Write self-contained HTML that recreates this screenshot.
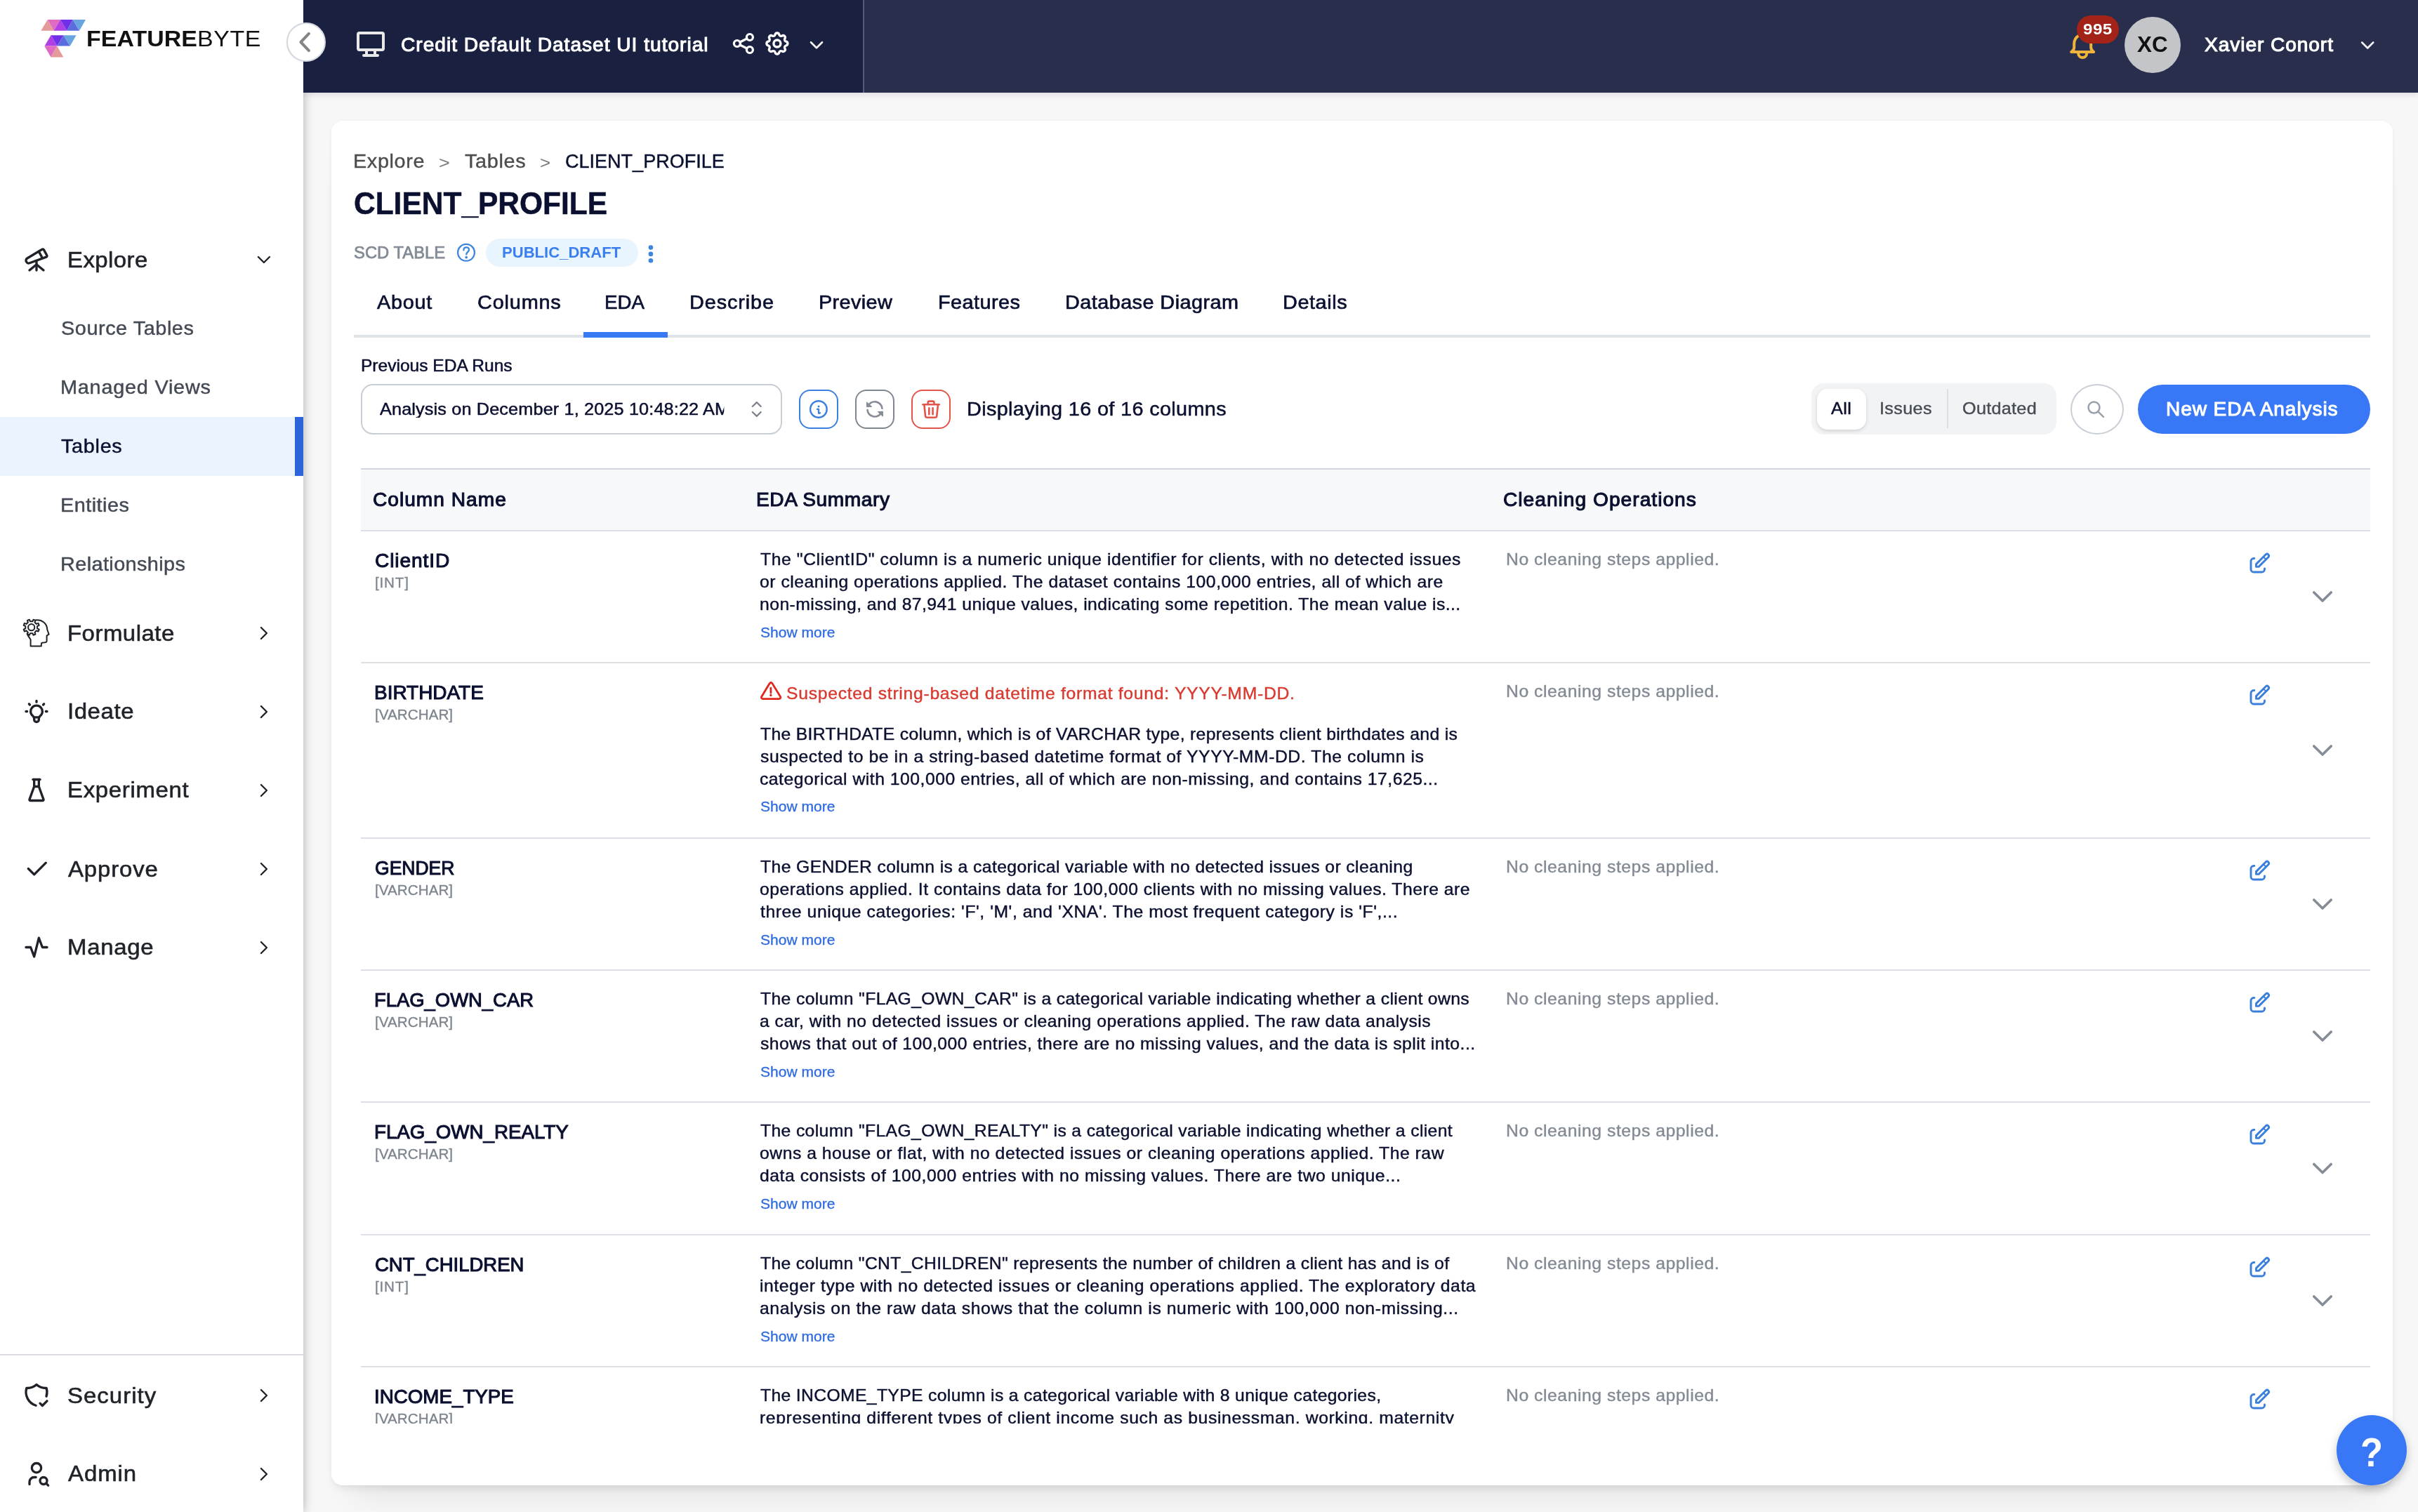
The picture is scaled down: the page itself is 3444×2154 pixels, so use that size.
<!DOCTYPE html>
<html lang="en"><head><meta charset="utf-8"><title>CLIENT_PROFILE - EDA</title>
<style>
html,body{margin:0;padding:0;background:#f7f7f8;}
body{width:3444px;height:2154px;overflow:hidden;position:relative;background:#f7f7f8;font-family:"Liberation Sans",sans-serif;}
.abs{position:absolute;}
.t{position:absolute;white-space:pre;line-height:1;transform-origin:0 50%;}
#sidebar{left:0;top:0;width:432px;height:2154px;background:#fff;box-shadow:0 0 14px rgba(0,0,0,.30);}
#hdrshadow{left:432px;top:0;width:3012px;height:132px;box-shadow:0 2px 9px rgba(20,25,60,.13);}
#hdrL{left:432px;top:0;width:798px;height:132px;background:#1a203f;}
#hdrR{left:1229px;top:0;width:2215px;height:132px;background:#282e4b;border-left:2px solid #565c76;box-sizing:border-box;}
#collapse{left:408px;top:32px;width:56px;height:56px;border-radius:50%;background:#fff;border:2px solid #d3d7df;box-sizing:border-box;box-shadow:0 1px 3px rgba(0,0,0,.08);}
#card{left:472px;top:172px;width:2936px;height:1944px;border-radius:16px;background:#fff;box-shadow:0 8px 12px -4px rgba(0,0,0,.08),0 38px 48px -30px rgba(0,0,0,.10),0 0 5px rgba(0,0,0,.03);}
#active{left:0;top:594px;width:432px;height:84px;background:#eaf4fe;}
#activebar{left:420px;top:594px;width:12px;height:84px;background:#2c65da;}
#badge995{left:2958px;top:22px;width:60px;height:40px;border-radius:20px;background:#a32318;}
#avatar{left:3026px;top:24px;width:80px;height:80px;border-radius:50%;background:#c4c5c9;}
#pubdraft{left:692px;top:340px;width:217px;height:40px;border-radius:20px;background:#e8f4fe;}
#tabline{left:504px;top:477px;width:2872px;height:4px;background:#dfe2e7;}
#tabactive{left:831px;top:473px;width:120px;height:8px;background:#3878f5;}
#select{left:514px;top:547px;width:600px;height:72px;border:2px solid #c9ced6;border-radius:17px;box-sizing:border-box;background:#fff;}
.ib{top:555px;width:56px;height:56px;border-radius:16px;box-sizing:border-box;border:2px solid;background:#fff;}
#seg{left:2580px;top:546px;width:349px;height:73px;border-radius:18px;background:#f2f3f5;}
#segall{left:2588px;top:554px;width:70px;height:58px;border-radius:15px;background:#fff;box-shadow:0 2px 5px rgba(0,0,0,.14);}
#segdiv{left:2773px;top:554px;width:2px;height:56px;background:#dcdfe4;}
#search{left:2949px;top:547px;width:76px;height:72px;border-radius:50%;border:2px solid #c9ced6;box-sizing:border-box;background:#fff;}
#newbtn{left:3045px;top:548px;width:331px;height:70px;border-radius:35px;background:#3877f5;}
#thead{left:514px;top:667px;width:2862px;height:90px;background:#f7f8fa;border-top:2px solid #d2d6de;border-bottom:2px solid #dde0e6;box-sizing:border-box;}
#cover{left:480px;top:2028px;width:2920px;height:80px;background:#fff;}
#help{left:3328px;top:2016px;width:100px;height:100px;border-radius:50%;background:#3877f5;box-shadow:0 6px 14px rgba(0,0,0,.22);}
</style></head><body>
<div class="abs" id="hdrshadow"></div>
<div class="abs" id="card"></div>
<div class="abs" id="sidebar"></div>
<div class="abs" id="hdrL"></div><div class="abs" id="hdrR"></div>
<div class="abs" id="active"></div><div class="abs" id="activebar"></div>

<svg class="abs" style="left:0;top:0" width="432" height="2154" viewBox="0 0 432 2154" fill="none" stroke="#1f2329" stroke-linecap="round" stroke-linejoin="round">
<!-- logo -->
<g stroke="none">
<polygon points="58.3,43.8 67.8,28 76.6,43.8" fill="#e59a9a"/>
<polygon points="67.8,28 86,28 76.6,43.8" fill="#df6cc0"/>
<polygon points="76.6,43.8 86,28 95.1,43.8" fill="#b040e4"/>
<polygon points="86,28 103.8,28 95.1,43.8" fill="#7030e8"/>
<polygon points="95.1,43.8 103.8,28 113,43.8" fill="#5b6cdf"/>
<polygon points="103.8,28 122,28 113,43.8" fill="#68a4e0"/>
<polygon points="63.6,65.6 72.5,50.2 81.4,65.6" fill="#b040e4"/>
<polygon points="72.5,50.2 90.5,50.2 81.4,65.6" fill="#7030e8"/>
<polygon points="81.4,65.6 90.5,50.2 99.8,65.6" fill="#5b6cdf"/>
<polygon points="90.5,50.2 108.6,50.2 99.8,65.6" fill="#68a4e0"/>
<polygon points="63.2,65.6 81.2,65.6 72.5,81.6" fill="#df6cc0"/>
<polygon points="72.5,81.6 81.2,65.6 90.4,81.6" fill="#e59a9a"/>
</g>
<g transform="translate(32 350) scale(1.6667)" stroke-width="2.0"><path d="M6 21l6 -5l6 5"/><path d="M12 13v8"/><path d="M3.294 13.678l.166 .281c.52 .88 1.624 1.265 2.605 .91l14.242 -5.165a1.023 1.023 0 0 0 .565 -1.456l-2.62 -4.705a1.087 1.087 0 0 0 -1.447 -.42l-.056 .032l-12.694 7.618c-1.02 .613 -1.357 1.897 -.76 2.905z"/><path d="M14 5l3 5.5"/></g>
<path d="M367.9 366 L375.9 374 L383.9 366" stroke-width="2.4"/>
<!-- formulate: head with gear -->
<g stroke-width="2">
<path d="M53.13 895.38 L55.74 896.54 L54.51 899.50 L51.85 898.48 L49.48 900.85 L50.50 903.51 L47.54 904.74 L46.38 902.13 L43.02 902.13 L41.86 904.74 L38.90 903.51 L39.92 900.85 L37.55 898.48 L34.89 899.50 L33.66 896.54 L36.27 895.38 L36.27 892.02 L33.66 890.86 L34.89 887.90 L37.55 888.92 L39.92 886.55 L38.90 883.89 L41.86 882.66 L43.02 885.27 L46.38 885.27 L47.54 882.66 L50.50 883.89 L49.48 886.55 L51.85 888.92 L54.51 887.90 L55.74 890.86 L53.13 892.02 Z"/>
<circle cx="44.7" cy="893.7" r="4.6"/>
<path d="M50.5 883.5 C60 882.5 67 888 67.3 897 L69.6 903.6 L66.6 905.6 L66.6 913.5 C66.6 915.2 65 915.4 60 915.8 C58.8 916 58.8 917 58.8 920.6 H43.6 V911 C41.5 908 39.5 905.5 38.6 902.6"/>
</g>
<path d="M371.9 894 L379.9 902 L371.9 910" fill="none" stroke="#1f2329" stroke-width="2.4" stroke-linecap="round" stroke-linejoin="round"/>
<g transform="translate(32 993.5) scale(1.6667)" stroke-width="2.0"><path d="M3 12h1m8 -9v1m8 8h1m-15.4 -6.4l.7 .7m12.1 -.7l-.7 .7"/><path d="M9 16a5 5 0 1 1 6 0a3.5 3.5 0 0 0 -1 3a2 2 0 0 1 -4 0a3.5 3.5 0 0 0 -1 -3"/><path d="M9.7 17l4.6 0"/></g>
<path d="M371.9 1006 L379.9 1014 L371.9 1022" fill="none" stroke="#1f2329" stroke-width="2.4" stroke-linecap="round" stroke-linejoin="round"/>
<g transform="translate(32 1105.5) scale(1.6667)" stroke-width="2.0"><path d="M9 3l6 0"/><path d="M10 9l4 0"/><path d="M10 3v6l-4 11a.7 .7 0 0 0 .5 1h11a.7 .7 0 0 0 .5 -1l-4 -11v-6"/></g>
<path d="M371.9 1118 L379.9 1126 L371.9 1134" fill="none" stroke="#1f2329" stroke-width="2.4" stroke-linecap="round" stroke-linejoin="round"/>
<g transform="translate(32 1217.5) scale(1.6667)" stroke-width="2.0"><path d="M5 12l5 5l10 -10"/></g>
<path d="M371.9 1230 L379.9 1238 L371.9 1246" fill="none" stroke="#1f2329" stroke-width="2.4" stroke-linecap="round" stroke-linejoin="round"/>
<g transform="translate(32 1329.5) scale(1.6667)" stroke-width="2.0"><path d="M3 12h4l3 8l4 -16l3 8h4"/></g>
<path d="M371.9 1342 L379.9 1350 L371.9 1358" fill="none" stroke="#1f2329" stroke-width="2.4" stroke-linecap="round" stroke-linejoin="round"/>
<path d="M0 1930 H432" stroke="#d9dde3" stroke-width="2" stroke-linecap="butt"/>
<g transform="translate(32 1967.5) scale(1.6667)" stroke-width="2.0"><path d="M11.46 20.846a12 12 0 0 1 -7.96 -14.846a12 12 0 0 0 8.5 -3a12 12 0 0 0 8.5 3a12 12 0 0 1 -.09 7.06"/><path d="M15 19l2 2l4 -4"/></g>
<path d="M371.9 1980 L379.9 1988 L371.9 1996" fill="none" stroke="#1f2329" stroke-width="2.4" stroke-linecap="round" stroke-linejoin="round"/>
<g transform="translate(32 2079.5) scale(1.6667)" stroke-width="2.0"><path d="M8 7a4 4 0 1 0 8 0a4 4 0 0 0 -8 0"/><path d="M6 21v-2a4 4 0 0 1 4 -4h1.5"/><path d="M18 18m-3 0a3 3 0 1 0 6 0a3 3 0 1 0 -6 0"/><path d="M20.2 20.2l1.8 1.8"/></g>
<path d="M371.9 2092 L379.9 2100 L371.9 2108" fill="none" stroke="#1f2329" stroke-width="2.4" stroke-linecap="round" stroke-linejoin="round"/>
</svg>

<svg class="abs" style="left:432px;top:0" width="3012" height="132" viewBox="432 0 3012 132" fill="none" stroke-linecap="round" stroke-linejoin="round">
<g transform="translate(504 39) scale(2.0000)" stroke-width="2.0" stroke="#e9e9ea"><path d="M3 5a1 1 0 0 1 1 -1h16a1 1 0 0 1 1 1v10a1 1 0 0 1 -1 1h-16a1 1 0 0 1 -1 -1v-10z"/><path d="M7 20h10"/><path d="M9 16v4"/><path d="M15 16v4"/></g>
<g transform="translate(1040.9 44) scale(1.5000)" stroke-width="2.15" stroke="#ffffff"><path d="M6 12m-3 0a3 3 0 1 0 6 0a3 3 0 1 0 -6 0"/><path d="M18 6m-3 0a3 3 0 1 0 6 0a3 3 0 1 0 -6 0"/><path d="M18 18m-3 0a3 3 0 1 0 6 0a3 3 0 1 0 -6 0"/><path d="M8.7 10.7l6.6 -3.4"/><path d="M8.7 13.3l6.6 3.4"/></g>
<g transform="translate(1086.9 42) scale(1.6667)" stroke-width="2.0" stroke="#ffffff"><path d="M10.325 4.317c.426 -1.756 2.924 -1.756 3.35 0a1.724 1.724 0 0 0 2.573 1.066c1.543 -.94 3.31 .826 2.37 2.37a1.724 1.724 0 0 0 1.065 2.572c1.756 .426 1.756 2.924 0 3.35a1.724 1.724 0 0 0 -1.066 2.573c.94 1.543 -.826 3.31 -2.37 2.37a1.724 1.724 0 0 0 -2.572 1.065c-.426 1.756 -2.924 1.756 -3.35 0a1.724 1.724 0 0 0 -2.573 -1.066c-1.543 .94 -3.31 -.826 -2.37 -2.37a1.724 1.724 0 0 0 -1.065 -2.572c-1.756 -.426 -1.756 -2.924 0 -3.35a1.724 1.724 0 0 0 1.066 -2.573c-.94 -1.543 .826 -3.31 2.37 -2.37c1 .608 2.296 .07 2.572 -1.065z"/><path d="M9 12a3 3 0 1 0 6 0a3 3 0 0 0 -6 0"/></g>
<g transform="translate(1147 48.2) scale(1.3333)" stroke-width="2.0" stroke="#f1f1f3"><path d="M6 9l6 6l6 -6"/></g>
<g transform="translate(2942.2 40) scale(2.0000)" stroke-width="2.0" stroke="#f0b43c"><path d="M10 5a2 2 0 1 1 4 0a7 7 0 0 1 4 6v3a4 4 0 0 0 2 3h-16a4 4 0 0 0 2 -3v-3a7 7 0 0 1 4 -6"/><path d="M9 17v1a3 3 0 0 0 6 0v-1"/></g>
<g transform="translate(3356.2 48.5) scale(1.3333)" stroke-width="2.0" stroke="#f1f1f3"><path d="M6 9l6 6l6 -6"/></g>
</svg>
<div class="abs" id="collapse"></div>
<svg class="abs" style="left:408px;top:32px" width="56" height="56" viewBox="408 32 56 56" fill="none"><path d="M439.9 47.9 L428.4 60 L439.9 72.1" stroke="#858585" stroke-width="4" stroke-linecap="round" stroke-linejoin="round"/></svg>
<div class="abs" id="badge995"></div><div class="abs" id="avatar"></div>
<div class="abs" id="pubdraft"></div>
<div class="abs" id="tabline"></div><div class="abs" id="tabactive"></div>
<div class="abs" id="select"></div>
<div class="abs ib" style="left:1138px;border-color:#3b7fe0"></div>
<div class="abs ib" style="left:1218px;border-color:#7f8791"></div>
<div class="abs ib" style="left:1298px;border-color:#e5544b"></div>
<div class="abs" id="seg"></div><div class="abs" id="segall"></div><div class="abs" id="segdiv"></div>
<div class="abs" id="search"></div>
<div class="abs" id="newbtn"></div>
<div class="abs" id="thead"></div>

<svg class="abs" style="left:0;top:0" width="3444" height="700" viewBox="0 0 3444 700" fill="none" stroke-linecap="round" stroke-linejoin="round">
<!-- ? circle -->
<g stroke="#3d85dd" stroke-width="2.3">
<circle cx="664" cy="359.8" r="11.9"/>
<path d="M660.4 356.4 C660.4 353.6 662 352.4 664.2 352.4 C666.6 352.4 668 353.8 668 355.8 C668 358.8 664.2 358.8 664.2 362.4"/>
<circle cx="664.2" cy="366.6" r="0.7" fill="#3d85dd"/>
</g>
<g fill="#3d85dd"><circle cx="926.9" cy="352.6" r="3.3"/><circle cx="926.9" cy="361.9" r="3.3"/><circle cx="926.9" cy="371.3" r="3.3"/></g>
<!-- select chevrons -->
<path d="M1071.8 579 L1077.8 573.1 L1083.7 579 M1071.8 587 L1077.8 592.9 L1083.7 587" stroke="#7a818b" stroke-width="2.2"/>
<!-- info -->
<g stroke="#3b7fe0" stroke-width="2.4">
<circle cx="1165.9" cy="583" r="11.8"/>
</g>
<g fill="#3b7fe0"><circle cx="1166.05" cy="578.9" r="1.5"/></g>
<path d="M1163.9 582.9 H1166 V588.4 Q1166.3 589.6 1168.1 588.2" stroke="#3b7fe0" stroke-width="2.3"/>
<!-- refresh -->
<g stroke="#868d96" stroke-width="2.6">
<path d="M1236.1 579 A10.6 10.6 0 0 1 1256.5 581.8"/>
<path d="M1235.5 584 A10.6 10.6 0 0 0 1254.1 589.7"/>
</g>
<g fill="#868d96" stroke="#868d96" stroke-width="1.2"><path d="M1234.6 573.2 L1234.6 579.5 L1241.3 579.3 Z"/><path d="M1250.6 586.6 L1257.3 586.3 L1257.3 592.8 Z"/></g>
<!-- trash -->
<g stroke="#e5544b" stroke-width="2.6">
<path d="M1314.5 576.3 H1337.7"/>
<path d="M1321.7 576 V573.4 a1.8 1.8 0 0 1 1.8 -1.8 H1328.7 a1.8 1.8 0 0 1 1.8 1.8 V576"/>
<path d="M1316.4 577.2 L1318 592.4 a2.6 2.6 0 0 0 2.6 2.4 H1331.7 a2.6 2.6 0 0 0 2.6 -2.4 L1335.9 577.2"/>
<path d="M1323.3 581.2 V590.2 M1328.6 581.2 V590.2"/>
</g>
<!-- search -->
<g stroke="#9aa1aa" stroke-width="2.5"><circle cx="2982.5" cy="580.6" r="8"/><path d="M2988.6 586.6 L2996 593.8"/></g>
</svg>
<svg class="abs" style="left:0;top:0" width="3444" height="2154" viewBox="0 0 3444 2154" fill="none" stroke-linecap="round" stroke-linejoin="round"><g transform="translate(0 0)" stroke="#3a7fdc" stroke-width="2.9">
<path d="M3210.8 795.5 H3210 a4 4 0 0 0 -4 4 V811 a4 4 0 0 0 4 4 H3221.5 a4 4 0 0 0 4 -4 V810"/>
<path d="M3217.1 807.4 L3213.5 807.4 L3213.5 803.6 L3227.1 790 A2.6 2.6 0 0 1 3230.8 793.7 Z"/>
<path d="M3224.3 793.7 L3227.1 796.5" stroke-width="2"/>
</g><path d="M3295.8 844.0 L3308 856.0 L3320.2 844.0" stroke="#858c96" stroke-width="3.6"/><g transform="translate(0 188)" stroke="#3a7fdc" stroke-width="2.9">
<path d="M3210.8 795.5 H3210 a4 4 0 0 0 -4 4 V811 a4 4 0 0 0 4 4 H3221.5 a4 4 0 0 0 4 -4 V810"/>
<path d="M3217.1 807.4 L3213.5 807.4 L3213.5 803.6 L3227.1 790 A2.6 2.6 0 0 1 3230.8 793.7 Z"/>
<path d="M3224.3 793.7 L3227.1 796.5" stroke-width="2"/>
</g><path d="M3295.8 1063.0 L3308 1075.0 L3320.2 1063.0" stroke="#858c96" stroke-width="3.6"/><g stroke="#e1261c" stroke-width="2.8"><path d="M1096.2 973.6 a2.2 2.2 0 0 1 3.8 0 L1111.5 992.4 a2.2 2.2 0 0 1 -1.9 3.3 H1086.6 a2.2 2.2 0 0 1 -1.9 -3.3 Z"/><path d="M1097.9 980.2 V987"/><circle cx="1097.9" cy="990.5" r="0.9" fill="#e1261c" stroke-width="1.6"/></g><path d="M514 944 H3376" stroke="#dde0e6" stroke-width="2" stroke-linecap="butt"/><g transform="translate(0 438)" stroke="#3a7fdc" stroke-width="2.9">
<path d="M3210.8 795.5 H3210 a4 4 0 0 0 -4 4 V811 a4 4 0 0 0 4 4 H3221.5 a4 4 0 0 0 4 -4 V810"/>
<path d="M3217.1 807.4 L3213.5 807.4 L3213.5 803.6 L3227.1 790 A2.6 2.6 0 0 1 3230.8 793.7 Z"/>
<path d="M3224.3 793.7 L3227.1 796.5" stroke-width="2"/>
</g><path d="M3295.8 1282.0 L3308 1294.0 L3320.2 1282.0" stroke="#858c96" stroke-width="3.6"/><path d="M514 1194 H3376" stroke="#dde0e6" stroke-width="2" stroke-linecap="butt"/><g transform="translate(0 626)" stroke="#3a7fdc" stroke-width="2.9">
<path d="M3210.8 795.5 H3210 a4 4 0 0 0 -4 4 V811 a4 4 0 0 0 4 4 H3221.5 a4 4 0 0 0 4 -4 V810"/>
<path d="M3217.1 807.4 L3213.5 807.4 L3213.5 803.6 L3227.1 790 A2.6 2.6 0 0 1 3230.8 793.7 Z"/>
<path d="M3224.3 793.7 L3227.1 796.5" stroke-width="2"/>
</g><path d="M3295.8 1470.0 L3308 1482.0 L3320.2 1470.0" stroke="#858c96" stroke-width="3.6"/><path d="M514 1382 H3376" stroke="#dde0e6" stroke-width="2" stroke-linecap="butt"/><g transform="translate(0 814)" stroke="#3a7fdc" stroke-width="2.9">
<path d="M3210.8 795.5 H3210 a4 4 0 0 0 -4 4 V811 a4 4 0 0 0 4 4 H3221.5 a4 4 0 0 0 4 -4 V810"/>
<path d="M3217.1 807.4 L3213.5 807.4 L3213.5 803.6 L3227.1 790 A2.6 2.6 0 0 1 3230.8 793.7 Z"/>
<path d="M3224.3 793.7 L3227.1 796.5" stroke-width="2"/>
</g><path d="M3295.8 1658.5 L3308 1670.5 L3320.2 1658.5" stroke="#858c96" stroke-width="3.6"/><path d="M514 1570 H3376" stroke="#dde0e6" stroke-width="2" stroke-linecap="butt"/><g transform="translate(0 1003)" stroke="#3a7fdc" stroke-width="2.9">
<path d="M3210.8 795.5 H3210 a4 4 0 0 0 -4 4 V811 a4 4 0 0 0 4 4 H3221.5 a4 4 0 0 0 4 -4 V810"/>
<path d="M3217.1 807.4 L3213.5 807.4 L3213.5 803.6 L3227.1 790 A2.6 2.6 0 0 1 3230.8 793.7 Z"/>
<path d="M3224.3 793.7 L3227.1 796.5" stroke-width="2"/>
</g><path d="M3295.8 1847.0 L3308 1859.0 L3320.2 1847.0" stroke="#858c96" stroke-width="3.6"/><path d="M514 1759 H3376" stroke="#dde0e6" stroke-width="2" stroke-linecap="butt"/><g transform="translate(0 1191)" stroke="#3a7fdc" stroke-width="2.9">
<path d="M3210.8 795.5 H3210 a4 4 0 0 0 -4 4 V811 a4 4 0 0 0 4 4 H3221.5 a4 4 0 0 0 4 -4 V810"/>
<path d="M3217.1 807.4 L3213.5 807.4 L3213.5 803.6 L3227.1 790 A2.6 2.6 0 0 1 3230.8 793.7 Z"/>
<path d="M3224.3 793.7 L3227.1 796.5" stroke-width="2"/>
</g><path d="M3295.8 2034.5 L3308 2046.5 L3320.2 2034.5" stroke="#858c96" stroke-width="3.6"/><path d="M514 1947 H3376" stroke="#dde0e6" stroke-width="2" stroke-linecap="butt"/></svg>
<div class="abs" id="txt" style="left:0;top:0;width:3444px;height:2154px;will-change:transform">
<span class="t" style="left:122.76px;top:39.77px;font-size:31.7px;color:#111111;font-weight:700;letter-spacing:0.057px;transform:scaleX(1.0700);">FEATURE</span>
<span class="t" style="left:281.26px;top:39.77px;font-size:31.7px;color:#111111;letter-spacing:0.592px;transform:scaleX(1.0700);">BYTE</span>
<span class="t" style="left:95.95px;top:353.61px;font-size:32px;color:#1f2329;letter-spacing:0.406px;transform:scaleX(1.0300);-webkit-text-stroke:0.6px #1f2329;">Explore</span>
<span class="t" style="left:86.70px;top:454.00px;font-size:28px;color:#434a54;letter-spacing:0.537px;transform:scaleX(1.0300);-webkit-text-stroke:0.45px #434a54;">Source Tables</span>
<span class="t" style="left:85.57px;top:538.00px;font-size:28px;color:#434a54;letter-spacing:0.748px;transform:scaleX(1.0300);-webkit-text-stroke:0.45px #434a54;">Managed Views</span>
<span class="t" style="left:87.13px;top:622.00px;font-size:28px;color:#0b1030;letter-spacing:0.660px;transform:scaleX(1.0300);-webkit-text-stroke:0.45px #0b1030;">Tables</span>
<span class="t" style="left:86.17px;top:706.00px;font-size:28px;color:#434a54;letter-spacing:0.465px;transform:scaleX(1.0300);-webkit-text-stroke:0.45px #434a54;">Entities</span>
<span class="t" style="left:86.17px;top:790.00px;font-size:28px;color:#434a54;letter-spacing:0.387px;transform:scaleX(1.0300);-webkit-text-stroke:0.45px #434a54;">Relationships</span>
<span class="t" style="left:95.85px;top:885.61px;font-size:32px;color:#1f2329;letter-spacing:0.473px;transform:scaleX(1.0300);-webkit-text-stroke:0.6px #1f2329;">Formulate</span>
<span class="t" style="left:95.85px;top:997.41px;font-size:32px;color:#1f2329;letter-spacing:0.549px;transform:scaleX(1.0300);-webkit-text-stroke:0.6px #1f2329;">Ideate</span>
<span class="t" style="left:95.85px;top:1109.41px;font-size:32px;color:#1f2329;letter-spacing:0.640px;transform:scaleX(1.0300);-webkit-text-stroke:0.6px #1f2329;">Experiment</span>
<span class="t" style="left:96.81px;top:1221.51px;font-size:32px;color:#1f2329;letter-spacing:0.832px;transform:scaleX(1.0300);-webkit-text-stroke:0.6px #1f2329;">Approve</span>
<span class="t" style="left:96.15px;top:1333.41px;font-size:32px;color:#1f2329;letter-spacing:0.670px;transform:scaleX(1.0300);-webkit-text-stroke:0.6px #1f2329;">Manage</span>
<span class="t" style="left:96.48px;top:1971.51px;font-size:32px;color:#1f2329;letter-spacing:0.978px;transform:scaleX(1.0300);-webkit-text-stroke:0.6px #1f2329;">Security</span>
<span class="t" style="left:96.81px;top:2083.31px;font-size:32px;color:#1f2329;letter-spacing:0.900px;transform:scaleX(1.0300);-webkit-text-stroke:0.6px #1f2329;">Admin</span>
<span class="t" style="left:571.49px;top:50.39px;font-size:27.3px;color:#ffffff;letter-spacing:0.967px;transform:scaleX(1.0300);-webkit-text-stroke:1.0px #ffffff;">Credit Default Dataset UI tutorial</span>
<span class="t" style="left:3139.51px;top:49.79px;font-size:27.3px;color:#ffffff;letter-spacing:0.894px;transform:scaleX(1.0300);-webkit-text-stroke:1.0px #ffffff;">Xavier Conort</span>
<span class="t" style="left:3044.10px;top:48.26px;font-size:31px;color:#111111;font-weight:700;transform:scaleX(1.0099);">XC</span>
<span class="t" style="left:2967.20px;top:31.38px;font-size:22px;color:#ffffff;font-weight:700;letter-spacing:0.401px;transform:scaleX(1.1000);">995</span>
<span class="t" style="left:502.85px;top:216.30px;font-size:28px;color:#4d4d4d;letter-spacing:0.607px;transform:scaleX(1.0300);-webkit-text-stroke:0.4px #4d4d4d;">Explore</span>
<span class="t" style="left:624.88px;top:219.68px;font-size:24px;color:#7a7a7a;transform:scaleX(1.1250);">&gt;</span>
<span class="t" style="left:662.21px;top:216.30px;font-size:28px;color:#4d4d4d;letter-spacing:0.632px;transform:scaleX(1.0300);-webkit-text-stroke:0.4px #4d4d4d;">Tables</span>
<span class="t" style="left:769.42px;top:219.68px;font-size:24px;color:#7a7a7a;transform:scaleX(1.0833);">&gt;</span>
<span class="t" style="left:804.65px;top:216.30px;font-size:28px;color:#0b1030;transform:scaleX(0.9652);-webkit-text-stroke:0.45px #0b1030;">CLIENT_PROFILE</span>
<span class="t" style="left:503.98px;top:268.45px;font-size:44px;color:#0b1030;font-weight:700;transform:scaleX(0.9654);-webkit-text-stroke:0.5px #0b1030;">CLIENT_PROFILE</span>
<span class="t" style="left:504.09px;top:347.57px;font-size:24.4px;color:#828a94;transform:scaleX(0.9766);-webkit-text-stroke:0.75px #828a94;">SCD TABLE</span>
<span class="t" style="left:715.02px;top:349.35px;font-size:22.5px;color:#3a7ff0;font-weight:700;transform:scaleX(0.9805);">PUBLIC_DRAFT</span>
<span class="t" style="left:537.13px;top:417.37px;font-size:28px;color:#0b1030;letter-spacing:0.713px;transform:scaleX(1.0300);-webkit-text-stroke:0.65px #0b1030;">About</span>
<span class="t" style="left:680.30px;top:417.37px;font-size:28px;color:#0b1030;letter-spacing:0.808px;transform:scaleX(1.0300);-webkit-text-stroke:0.65px #0b1030;">Columns</span>
<span class="t" style="left:861.34px;top:417.37px;font-size:28px;color:#0b1030;transform:scaleX(0.9903);-webkit-text-stroke:0.65px #0b1030;">EDA</span>
<span class="t" style="left:982.27px;top:417.37px;font-size:28px;color:#0b1030;letter-spacing:0.858px;transform:scaleX(1.0300);-webkit-text-stroke:0.65px #0b1030;">Describe</span>
<span class="t" style="left:1166.07px;top:417.37px;font-size:28px;color:#0b1030;letter-spacing:0.358px;transform:scaleX(1.0300);-webkit-text-stroke:0.65px #0b1030;">Preview</span>
<span class="t" style="left:1336.27px;top:417.37px;font-size:28px;color:#0b1030;letter-spacing:0.445px;transform:scaleX(1.0300);-webkit-text-stroke:0.65px #0b1030;">Features</span>
<span class="t" style="left:1516.87px;top:417.37px;font-size:28px;color:#0b1030;letter-spacing:0.421px;transform:scaleX(1.0300);-webkit-text-stroke:0.65px #0b1030;">Database Diagram</span>
<span class="t" style="left:1827.07px;top:417.37px;font-size:28px;color:#0b1030;letter-spacing:0.561px;transform:scaleX(1.0300);-webkit-text-stroke:0.65px #0b1030;">Details</span>
<span class="t" style="left:513.83px;top:508.68px;font-size:24px;color:#0b1030;transform:scaleX(1.0228);-webkit-text-stroke:0.5px #0b1030;">Previous EDA Runs</span>
<span class="t" style="left:541.26px;top:570.86px;font-size:24.5px;color:#0b1030;letter-spacing:0.141px;transform:scaleX(1.0300);-webkit-text-stroke:0.5px #0b1030;width:475.96px;overflow:hidden;">Analysis on December 1, 2025 10:48:22 AM</span>
<span class="t" style="left:1377.20px;top:568.90px;font-size:28px;color:#0b1030;letter-spacing:0.332px;transform:scaleX(1.0300);-webkit-text-stroke:0.5px #0b1030;">Displaying 16 of 16 columns</span>
<span class="t" style="left:2608.26px;top:570.26px;font-size:24.5px;color:#0b1030;letter-spacing:0.450px;transform:scaleX(1.0300);-webkit-text-stroke:0.5px #0b1030;">All</span>
<span class="t" style="left:2677.15px;top:570.26px;font-size:24.5px;color:#474c54;letter-spacing:0.325px;transform:scaleX(1.0300);-webkit-text-stroke:0.4px #474c54;">Issues</span>
<span class="t" style="left:2794.78px;top:570.26px;font-size:24.5px;color:#474c54;letter-spacing:0.255px;transform:scaleX(1.0300);-webkit-text-stroke:0.4px #474c54;">Outdated</span>
<span class="t" style="left:3085.45px;top:568.79px;font-size:27.3px;color:#ffffff;letter-spacing:0.863px;transform:scaleX(1.0300);-webkit-text-stroke:1.0px #ffffff;">New EDA Analysis</span>
<span class="t" style="left:530.51px;top:698.37px;font-size:27.3px;color:#0b1030;letter-spacing:0.978px;transform:scaleX(1.0300);-webkit-text-stroke:1.05px #0b1030;">Column Name</span>
<span class="t" style="left:1077.28px;top:698.37px;font-size:27.3px;color:#0b1030;letter-spacing:0.544px;transform:scaleX(1.0300);-webkit-text-stroke:1.05px #0b1030;">EDA Summary</span>
<span class="t" style="left:2141.21px;top:698.37px;font-size:27.3px;color:#0b1030;letter-spacing:0.997px;transform:scaleX(1.0300);-webkit-text-stroke:1.05px #0b1030;">Cleaning Operations</span>
<span class="t" style="left:534.21px;top:785.17px;font-size:27.3px;color:#0b1030;letter-spacing:0.872px;transform:scaleX(1.0300);-webkit-text-stroke:1.05px #0b1030;">ClientID</span>
<span class="t" style="left:533.82px;top:820.07px;font-size:20px;color:#7c848e;letter-spacing:0.792px;transform:scaleX(1.0300);-webkit-text-stroke:0.3px #7c848e;">[INT]</span>
<span class="t" style="left:1082.92px;top:785.08px;font-size:24px;color:#0b1030;letter-spacing:0.563px;transform:scaleX(1.0300);-webkit-text-stroke:0.42px #0b1030;">The "ClientID" column is a numeric unique identifier for clients, with no detected issues</span>
<span class="t" style="left:1081.89px;top:817.08px;font-size:24px;color:#0b1030;letter-spacing:0.510px;transform:scaleX(1.0300);-webkit-text-stroke:0.42px #0b1030;">or cleaning operations applied. The dataset contains 100,000 entries, all of which are</span>
<span class="t" style="left:1081.89px;top:849.08px;font-size:24px;color:#0b1030;letter-spacing:0.430px;transform:scaleX(1.0300);-webkit-text-stroke:0.42px #0b1030;">non-missing, and 87,941 unique values, indicating some repetition. The mean value is...</span>
<span class="t" style="left:1082.65px;top:889.62px;font-size:21px;color:#2d6ae0;transform:scaleX(1.0025);-webkit-text-stroke:0.3px #2d6ae0;">Show more</span>
<span class="t" style="left:2144.58px;top:785.18px;font-size:24px;color:#828a94;letter-spacing:0.531px;transform:scaleX(1.0300);-webkit-text-stroke:0.4px #828a94;">No cleaning steps applied.</span>
<span class="t" style="left:533.19px;top:973.17px;font-size:27.3px;color:#0b1030;transform:scaleX(1.0237);-webkit-text-stroke:1.05px #0b1030;">BIRTHDATE</span>
<span class="t" style="left:533.82px;top:1008.07px;font-size:20px;color:#7c848e;letter-spacing:0.055px;transform:scaleX(1.0300);-webkit-text-stroke:0.3px #7c848e;">[VARCHAR]</span>
<span class="t" style="left:1119.68px;top:976.08px;font-size:24px;color:#d93a30;letter-spacing:0.687px;transform:scaleX(1.0300);-webkit-text-stroke:0.4px #d93a30;">Suspected string-based datetime format found: YYYY-MM-DD.</span>
<span class="t" style="left:1082.92px;top:1033.88px;font-size:24px;color:#0b1030;letter-spacing:0.320px;transform:scaleX(1.0300);-webkit-text-stroke:0.42px #0b1030;">The BIRTHDATE column, which is of VARCHAR type, represents client birthdates and is</span>
<span class="t" style="left:1082.92px;top:1065.88px;font-size:24px;color:#0b1030;letter-spacing:0.556px;transform:scaleX(1.0300);-webkit-text-stroke:0.42px #0b1030;">suspected to be in a string-based datetime format of YYYY-MM-DD. The column is</span>
<span class="t" style="left:1081.89px;top:1097.88px;font-size:24px;color:#0b1030;letter-spacing:0.487px;transform:scaleX(1.0300);-webkit-text-stroke:0.42px #0b1030;">categorical with 100,000 entries, all of which are non-missing, and contains 17,625...</span>
<span class="t" style="left:1082.65px;top:1138.42px;font-size:21px;color:#2d6ae0;transform:scaleX(1.0025);-webkit-text-stroke:0.3px #2d6ae0;">Show more</span>
<span class="t" style="left:2144.58px;top:973.18px;font-size:24px;color:#828a94;letter-spacing:0.531px;transform:scaleX(1.0300);-webkit-text-stroke:0.4px #828a94;">No cleaning steps applied.</span>
<span class="t" style="left:534.24px;top:1223.17px;font-size:27.3px;color:#0b1030;transform:scaleX(0.9714);-webkit-text-stroke:1.05px #0b1030;">GENDER</span>
<span class="t" style="left:533.82px;top:1258.07px;font-size:20px;color:#7c848e;letter-spacing:0.055px;transform:scaleX(1.0300);-webkit-text-stroke:0.3px #7c848e;">[VARCHAR]</span>
<span class="t" style="left:1082.92px;top:1223.08px;font-size:24px;color:#0b1030;letter-spacing:0.380px;transform:scaleX(1.0300);-webkit-text-stroke:0.42px #0b1030;">The GENDER column is a categorical variable with no detected issues or cleaning</span>
<span class="t" style="left:1081.89px;top:1255.08px;font-size:24px;color:#0b1030;letter-spacing:0.486px;transform:scaleX(1.0300);-webkit-text-stroke:0.42px #0b1030;">operations applied. It contains data for 100,000 clients with no missing values. There are</span>
<span class="t" style="left:1082.92px;top:1287.08px;font-size:24px;color:#0b1030;letter-spacing:0.544px;transform:scaleX(1.0300);-webkit-text-stroke:0.42px #0b1030;">three unique categories: 'F', 'M', and 'XNA'. The most frequent category is 'F',...</span>
<span class="t" style="left:1082.65px;top:1327.62px;font-size:21px;color:#2d6ae0;transform:scaleX(1.0025);-webkit-text-stroke:0.3px #2d6ae0;">Show more</span>
<span class="t" style="left:2144.58px;top:1223.18px;font-size:24px;color:#828a94;letter-spacing:0.531px;transform:scaleX(1.0300);-webkit-text-stroke:0.4px #828a94;">No cleaning steps applied.</span>
<span class="t" style="left:533.22px;top:1411.17px;font-size:27.3px;color:#0b1030;transform:scaleX(1.0043);-webkit-text-stroke:1.05px #0b1030;">FLAG_OWN_CAR</span>
<span class="t" style="left:533.82px;top:1446.07px;font-size:20px;color:#7c848e;letter-spacing:0.055px;transform:scaleX(1.0300);-webkit-text-stroke:0.3px #7c848e;">[VARCHAR]</span>
<span class="t" style="left:1082.92px;top:1411.08px;font-size:24px;color:#0b1030;letter-spacing:0.355px;transform:scaleX(1.0300);-webkit-text-stroke:0.42px #0b1030;">The column "FLAG_OWN_CAR" is a categorical variable indicating whether a client owns</span>
<span class="t" style="left:1081.89px;top:1443.08px;font-size:24px;color:#0b1030;letter-spacing:0.479px;transform:scaleX(1.0300);-webkit-text-stroke:0.42px #0b1030;">a car, with no detected issues or cleaning operations applied. The raw data analysis</span>
<span class="t" style="left:1082.92px;top:1475.08px;font-size:24px;color:#0b1030;letter-spacing:0.463px;transform:scaleX(1.0300);-webkit-text-stroke:0.42px #0b1030;">shows that out of 100,000 entries, there are no missing values, and the data is split into...</span>
<span class="t" style="left:1082.65px;top:1515.62px;font-size:21px;color:#2d6ae0;transform:scaleX(1.0025);-webkit-text-stroke:0.3px #2d6ae0;">Show more</span>
<span class="t" style="left:2144.58px;top:1411.18px;font-size:24px;color:#828a94;letter-spacing:0.531px;transform:scaleX(1.0300);-webkit-text-stroke:0.4px #828a94;">No cleaning steps applied.</span>
<span class="t" style="left:533.20px;top:1599.17px;font-size:27.3px;color:#0b1030;transform:scaleX(1.0152);-webkit-text-stroke:1.05px #0b1030;">FLAG_OWN_REALTY</span>
<span class="t" style="left:533.82px;top:1634.07px;font-size:20px;color:#7c848e;letter-spacing:0.055px;transform:scaleX(1.0300);-webkit-text-stroke:0.3px #7c848e;">[VARCHAR]</span>
<span class="t" style="left:1082.92px;top:1599.08px;font-size:24px;color:#0b1030;letter-spacing:0.345px;transform:scaleX(1.0300);-webkit-text-stroke:0.42px #0b1030;">The column "FLAG_OWN_REALTY" is a categorical variable indicating whether a client</span>
<span class="t" style="left:1081.89px;top:1631.08px;font-size:24px;color:#0b1030;letter-spacing:0.500px;transform:scaleX(1.0300);-webkit-text-stroke:0.42px #0b1030;">owns a house or flat, with no detected issues or cleaning operations applied. The raw</span>
<span class="t" style="left:1081.89px;top:1663.08px;font-size:24px;color:#0b1030;letter-spacing:0.517px;transform:scaleX(1.0300);-webkit-text-stroke:0.42px #0b1030;">data consists of 100,000 entries with no missing values. There are two unique...</span>
<span class="t" style="left:1082.65px;top:1703.62px;font-size:21px;color:#2d6ae0;transform:scaleX(1.0025);-webkit-text-stroke:0.3px #2d6ae0;">Show more</span>
<span class="t" style="left:2144.58px;top:1599.18px;font-size:24px;color:#828a94;letter-spacing:0.531px;transform:scaleX(1.0300);-webkit-text-stroke:0.4px #828a94;">No cleaning steps applied.</span>
<span class="t" style="left:534.22px;top:1788.17px;font-size:27.3px;color:#0b1030;transform:scaleX(1.0074);-webkit-text-stroke:1.05px #0b1030;">CNT_CHILDREN</span>
<span class="t" style="left:533.82px;top:1823.07px;font-size:20px;color:#7c848e;letter-spacing:0.792px;transform:scaleX(1.0300);-webkit-text-stroke:0.3px #7c848e;">[INT]</span>
<span class="t" style="left:1082.92px;top:1788.08px;font-size:24px;color:#0b1030;letter-spacing:0.333px;transform:scaleX(1.0300);-webkit-text-stroke:0.42px #0b1030;">The column "CNT_CHILDREN" represents the number of children a client has and is of</span>
<span class="t" style="left:1081.89px;top:1820.08px;font-size:24px;color:#0b1030;letter-spacing:0.550px;transform:scaleX(1.0300);-webkit-text-stroke:0.42px #0b1030;">integer type with no detected issues or cleaning operations applied. The exploratory data</span>
<span class="t" style="left:1081.89px;top:1852.08px;font-size:24px;color:#0b1030;letter-spacing:0.559px;transform:scaleX(1.0300);-webkit-text-stroke:0.42px #0b1030;">analysis on the raw data shows that the column is numeric with 100,000 non-missing...</span>
<span class="t" style="left:1082.65px;top:1892.62px;font-size:21px;color:#2d6ae0;transform:scaleX(1.0025);-webkit-text-stroke:0.3px #2d6ae0;">Show more</span>
<span class="t" style="left:2144.58px;top:1788.18px;font-size:24px;color:#828a94;letter-spacing:0.531px;transform:scaleX(1.0300);-webkit-text-stroke:0.4px #828a94;">No cleaning steps applied.</span>
<span class="t" style="left:533.20px;top:1976.17px;font-size:27.3px;color:#0b1030;transform:scaleX(1.0164);-webkit-text-stroke:1.05px #0b1030;">INCOME_TYPE</span>
<span class="t" style="left:533.82px;top:2011.07px;font-size:20px;color:#7c848e;letter-spacing:0.055px;transform:scaleX(1.0300);-webkit-text-stroke:0.3px #7c848e;">[VARCHAR]</span>
<span class="t" style="left:1082.92px;top:1976.08px;font-size:24px;color:#0b1030;letter-spacing:0.336px;transform:scaleX(1.0300);-webkit-text-stroke:0.42px #0b1030;">The INCOME_TYPE column is a categorical variable with 8 unique categories,</span>
<span class="t" style="left:1081.89px;top:2008.08px;font-size:24px;color:#0b1030;letter-spacing:0.603px;transform:scaleX(1.0300);-webkit-text-stroke:0.42px #0b1030;">representing different types of client income such as businessman, working, maternity</span>
<span class="t" style="left:2144.58px;top:1976.18px;font-size:24px;color:#828a94;letter-spacing:0.531px;transform:scaleX(1.0300);-webkit-text-stroke:0.4px #828a94;">No cleaning steps applied.</span>
</div>
<div class="abs" id="cover"></div>
<div class="abs" id="help"></div>
<div class="abs" id="txt2" style="left:3300px;top:2000px;width:144px;height:154px;will-change:transform"><span class="t" style="left:61.79px;top:39.70px;font-size:58px;color:#ffffff;font-weight:700;transform:scaleX(0.9032);">?</span></div>
</body></html>
